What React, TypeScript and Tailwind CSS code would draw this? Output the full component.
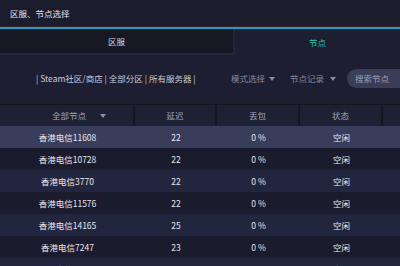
import React from 'react';

interface NodeRow {
    name: string;
    ping: number;
    loss: string;
    status: string;
}

const rows: NodeRow[] = [
    { name: '香港电信11608', ping: 22, loss: '0 %', status: '空闲' },
    { name: '香港电信10728', ping: 22, loss: '0 %', status: '空闲' },
    { name: '香港电信3770', ping: 22, loss: '0 %', status: '空闲' },
    { name: '香港电信11576', ping: 22, loss: '0 %', status: '空闲' },
    { name: '香港电信14165', ping: 25, loss: '0 %', status: '空闲' },
    { name: '香港电信7247', ping: 23, loss: '0 %', status: '空闲' },
    { name: '香港电信11054', ping: 23, loss: '0 %', status: '空闲' },
];

const Caret = ({ className = '' }: { className?: string }) => (
    <svg width="6" height="4" viewBox="0 0 6 4" className={className}>
        <path d="M0 0h6L3 4z" fill="currentColor" />
    </svg>
);

export default function App() {
    const rowBg = (i: number) => {
        if (i === 0) return 'bg-[#383d5b]';
        return i % 2 === 1 ? 'bg-[#1a1b2c]' : 'bg-[#22253e]';
    };

    return (
        <div
            className="w-[400px] h-[266px] overflow-hidden bg-[#1d1e31] text-[8.5px] leading-none select-none"
            style={{ fontFamily: '"Noto Sans CJK SC", "Noto Sans", sans-serif' }}
        >
            {/* Title bar */}
            <div className="h-[26px] flex items-center px-[10px] bg-[#1b1c2c] text-[#e4e4ec]">
                区服、节点选择
            </div>
            <div className="h-px bg-[#3b1f2e]" />
            <div className="h-[2px] bg-[#12a4c2]" />

            {/* Tabs */}
            <div className="h-[26px] flex">
                <div className="w-[235px] flex items-center justify-center bg-[#171823] border-r-2 border-b-2 border-[#23253a] text-[#d4d4de]">
                    区服
                </div>
                <div className="flex-1 flex items-center justify-center text-[#22c3b3]">
                    节点
                </div>
            </div>

            {/* Toolbar */}
            <div className="h-[49px] flex items-center pl-[36px] pb-[2px] whitespace-nowrap">
                <span className="w-[195px] shrink-0 text-[#c9cad6]">
                    | Steam社区/商店 | 全部分区 | 所有服务器 |
                </span>
                <span className="w-[59px] shrink-0 flex items-center gap-[4px] text-[#878a9f]">
                    模式选择
                    <Caret />
                </span>
                <span className="w-[57px] shrink-0 flex items-center gap-[6px] text-[#878a9f]">
                    节点记录
                    <Caret />
                </span>
                <div className="h-[19px] w-[70px] shrink-0 rounded-full bg-[#393d57] flex items-center pl-[8px] text-[#9ea0b4]">
                    搜索节点
                </div>
            </div>

            {/* Table header */}
            <div className="h-[22px] grid grid-cols-[135px_82px_83px_83px_1fr] bg-[#1e2034] border-t border-[#15161f] text-[#a3a5b8]">
                <div className="flex items-center gap-[14px] border-r-2 border-[#15161f] pl-[52px]">
                    全部节点
                    <Caret className="text-[#8c8ea4]" />
                </div>
                <div className="flex items-center justify-center border-r-2 border-[#15161f]">延迟</div>
                <div className="flex items-center justify-center border-r-2 border-[#15161f]">丢包</div>
                <div className="flex items-center justify-center border-r-2 border-[#15161f]">状态</div>
                <div />
            </div>

            {/* Rows */}
            {rows.map((r, i) => (
                <div
                    key={r.name}
                    className={`h-[22px] grid grid-cols-[135px_82px_83px_83px_1fr] text-[#e6e6ee] ${rowBg(i)}`}
                >
                    <div className="flex items-center justify-center">{r.name}</div>
                    <div className="flex items-center justify-center">{r.ping}</div>
                    <div className="flex items-center justify-center">{r.loss}</div>
                    <div className="flex items-center justify-center">{r.status}</div>
                    <div />
                </div>
            ))}
        </div>
    );
}
